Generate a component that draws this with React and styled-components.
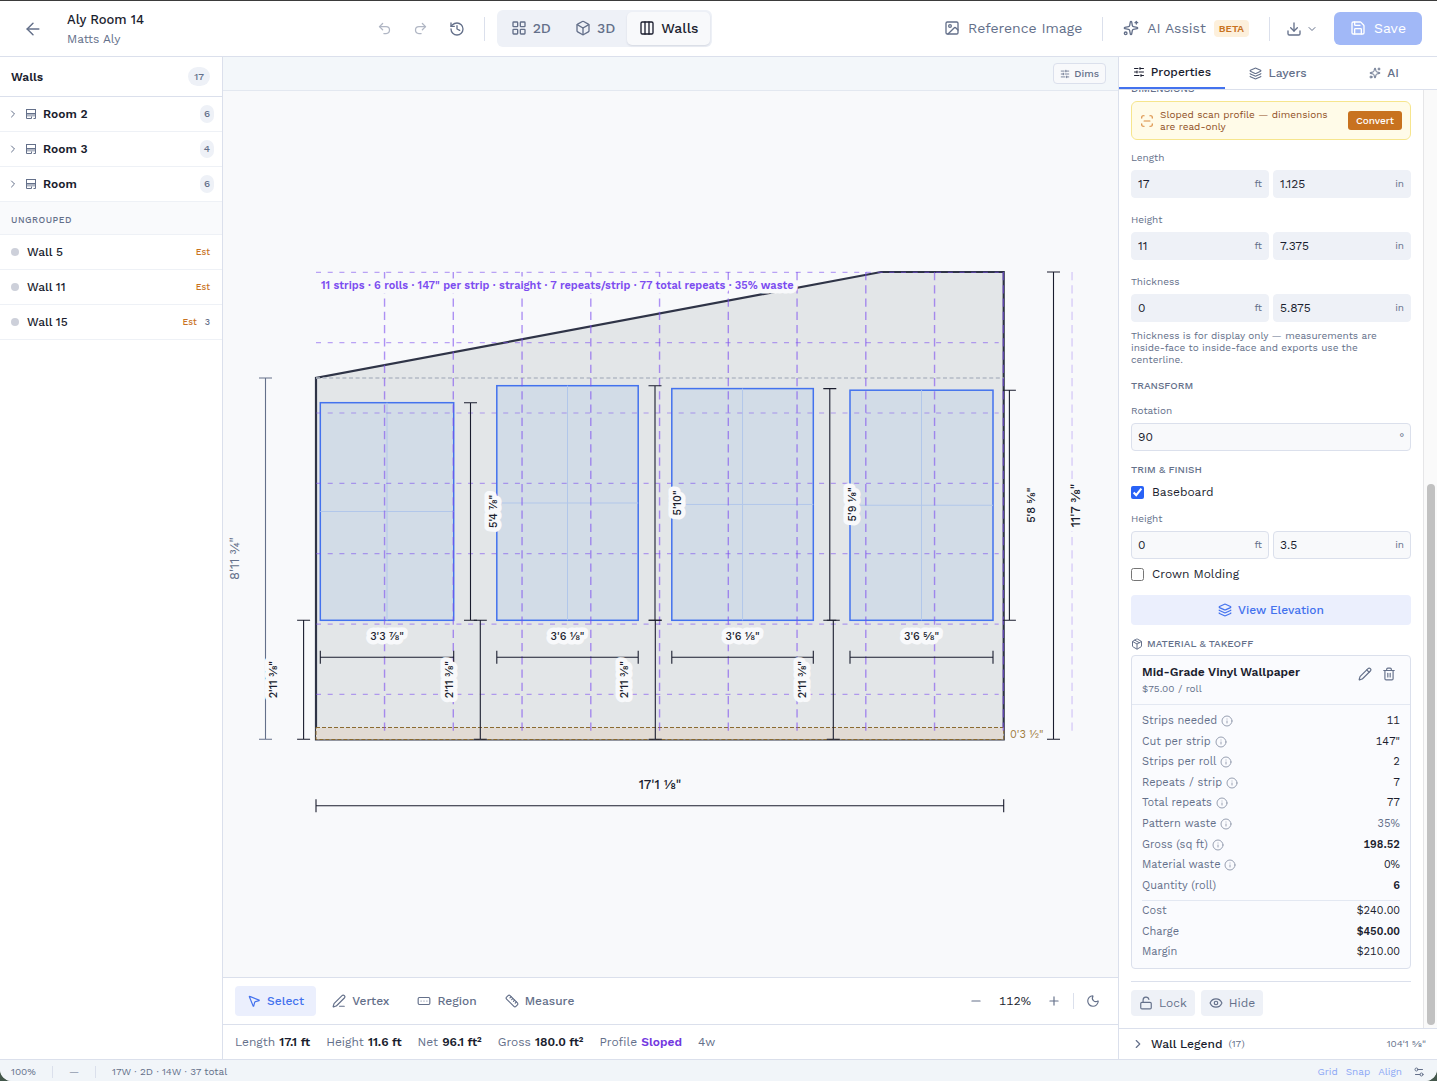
import React from "react";
import styled, { createGlobalStyle, css } from "styled-components";
import {
  ArrowLeft,
  Box,
  ChevronDown,
  ChevronRight,
  Columns3,
  Download,
  Eye,
  History,
  Image,
  Info,
  Layers,
  LayoutGrid,
  LockOpen,
  Minus,
  Moon,
  MousePointer2,
  Package,
  Pencil,
  PenLine,
  Plus,
  Redo2,
  RectangleEllipsis,
  Ruler,
  Save,
  ScanLine,
  Settings2,
  SlidersHorizontal,
  Sparkles,
  Trash2,
  Undo2,
} from "lucide-react";

const ink = "#1a1d2e";
const slate = "#64708a";
const line = "#dbe0ec";
const blue = "#4372ee";
const canvasBg = "#f8f9fb";

const GlobalStyle = createGlobalStyle`
  *, *::before, *::after {
    box-sizing: border-box;
  }
  body {
    margin: 0;
    background: #43574b;
    color: ${ink};
    font-family: "Work Sans", Inter, "Liberation Sans", sans-serif;
    font-size: 12px;
    line-height: 16px;
  }
  button, input {
    font: inherit;
    color: inherit;
  }
  button {
    border: 0;
    padding: 0;
    background: none;
    cursor: pointer;
  }
  svg {
    flex: none;
  }
`;

const Shell = styled.div`
  display: flex;
  flex-direction: column;
  height: 100vh;
  border-top: 1px solid #3b3b3b;
  border-radius: 0 0 12px 12px;
  overflow: hidden;
  background: #fff;
`;

const TopBar = styled.header`
  display: flex;
  align-items: center;
  justify-content: space-between;
  height: 56px;
  flex: none;
  padding: 0 15px 0 23px;
  border-bottom: 1px solid ${line};
`;

const Group = styled.div`
  display: flex;
  align-items: center;
  gap: ${(p) => p.$gap || 0}px;
`;

const TitleBlock = styled.div`
  margin-left: 24px;
`;

const Title = styled.h1`
  margin: 0;
  font-size: 13px;
  font-weight: 500;
  line-height: 20px;
`;

const Subtitle = styled.div`
  color: ${slate};
  line-height: 18px;
`;

const IconButton = styled.button`
  display: flex;
  align-items: center;
  justify-content: center;
  gap: 4px;
  width: ${(p) => p.$w || 18}px;
  height: ${(p) => p.$h || 24}px;
  color: ${slate};
  opacity: ${(p) => (p.disabled ? 0.5 : 1)};
`;

const Divider = styled.span`
  width: 1px;
  height: ${(p) => p.$h || 24}px;
  background: ${line};
`;

const Segments = styled.div`
  display: flex;
  padding: 2px;
  border-radius: 6px;
  background: #eef1f7;
`;

const Segment = styled.button`
  display: flex;
  align-items: center;
  gap: 6px;
  height: 33px;
  padding: 0 12px 1px;
  border-radius: 5px;
  font-size: 14px;
  font-weight: 500;
  color: ${slate};
  ${(p) =>
    p.$active &&
    css`
      background: ${canvasBg};
      color: ${ink};
      box-shadow: 0 1px 2px rgba(30, 40, 70, 0.12);
    `}
`;

const HeaderAction = styled.button`
  display: flex;
  align-items: center;
  gap: 8px;
  padding-bottom: 1px;
  font-size: 14px;
  color: ${slate};
`;

const Beta = styled.span`
  padding: 0 5px;
  border-radius: 4px;
  background: #fdf0dc;
  color: #c9731f;
  font-size: 10px;
  font-weight: 600;
  line-height: 17px;
`;

const SaveButton = styled(HeaderAction)`
  height: 33px;
  padding: 0 16px 1px;
  border-radius: 6px;
  background: #a1b8f7;
  color: #fff;
`;

const Main = styled.div`
  display: flex;
  flex: 1;
  min-height: 0;
`;

const Sidebar = styled.aside`
  width: 223px;
  flex: none;
  border-right: 1px solid ${line};
`;

const SidebarHead = styled.div`
  display: flex;
  align-items: center;
  justify-content: space-between;
  height: 40px;
  padding: 0 12px 0 11px;
  border-bottom: 1px solid ${line};
  font-weight: 600;
`;

const Count = styled.span`
  padding: 0 ${(p) => (p.$large ? 6 : 4)}px;
  border-radius: 10px;
  background: #eef1f7;
  color: ${slate};
  font-size: 10px;
  font-weight: 500;
  line-height: ${(p) => (p.$large ? 19 : 18)}px;
`;

const ListRow = styled.button`
  display: flex;
  align-items: center;
  gap: ${(p) => (p.$group ? 6 : 8)}px;
  width: 100%;
  height: 35px;
  padding: 0 ${(p) => (p.$group ? 8 : 12)}px 0 ${(p) => (p.$group ? 7 : 11)}px;
  border-bottom: 1px solid #eef1f6;
  text-align: left;
`;

const RowName = styled.span`
  flex: 1;
  font-weight: ${(p) => p.$weight};
`;

const GroupLabel = styled.div`
  height: 33px;
  padding: 2px 11px 0;
  border-bottom: 1px solid #eef1f6;
  background: #f9fafc;
  color: ${slate};
  font-size: 9px;
  font-weight: 500;
  letter-spacing: 0.5px;
  line-height: 32px;
`;

const Dot = styled.span`
  width: 8px;
  height: 8px;
  border-radius: 50%;
  background: #cdd0da;
`;

const Est = styled.span`
  color: #c9731f;
  font-size: 9px;
  font-weight: 500;
`;

const Openings = styled(Est)`
  color: ${slate};
`;

const Center = styled.main`
  display: flex;
  flex-direction: column;
  flex: 1;
  min-width: 0;
`;

const CanvasBar = styled.div`
  display: flex;
  align-items: center;
  justify-content: flex-end;
  height: 34px;
  flex: none;
  padding: 0 12px;
  border-bottom: 1px solid #e3e8f0;
  background: #f3f7fa;
`;

const DimsButton = styled.button`
  display: flex;
  align-items: center;
  gap: 4px;
  height: 21px;
  padding: 0 6px;
  border: 1px solid ${line};
  border-radius: 4px;
  background: ${canvasBg};
  color: ${slate};
  font-size: 10px;
  font-weight: 500;
`;

const Canvas = styled.div`
  flex: 1;
  min-height: 0;
  background: ${canvasBg};

  svg {
    display: block;
    width: 100%;
    height: 100%;
  }
`;

const ToolBar = styled.div`
  display: flex;
  align-items: center;
  justify-content: space-between;
  height: 47px;
  flex: none;
  padding: 0 16px 0 12px;
  border-top: 1px solid ${line};
`;

const Tool = styled.button`
  display: flex;
  align-items: center;
  gap: 6px;
  height: 30px;
  padding: 0 12px;
  border-radius: 4px;
  font-weight: 500;
  color: ${(p) => (p.$active ? blue : slate)};
  background: ${(p) => (p.$active ? "#ebeffd" : "none")};
`;

const Zoom = styled.output`
  width: 48px;
  text-align: center;
  font-variant-numeric: tabular-nums;
`;

const Metrics = styled.div`
  display: flex;
  align-items: center;
  gap: 16px;
  height: 35px;
  flex: none;
  padding: 0 12px;
  border-top: 1px solid ${line};
  color: ${slate};

  b {
    font-weight: 600;
    color: ${ink};
  }
`;

const Profile = styled.b`
  && {
    color: #7338e0;
  }
`;

const Inspector = styled.aside`
  display: flex;
  flex-direction: column;
  width: 319px;
  flex: none;
  border-left: 1px solid ${line};
`;

const Tabs = styled.div`
  display: flex;
  flex: none;
  height: 33px;
  border-bottom: 1px solid ${line};
`;

const Tab = styled.button`
  display: flex;
  flex: 1;
  align-items: center;
  justify-content: center;
  gap: 6px;
  font-weight: 500;
  color: ${(p) => (p.$active ? ink : slate)};
  border-bottom: ${(p) => (p.$active ? `2px solid ${blue}` : "0")};
`;

const ScrollArea = styled.div`
  display: flex;
  flex: 1;
  min-height: 0;
`;

const Properties = styled.div`
  display: flex;
  flex: 1;
  flex-direction: column;
  justify-content: flex-end;
  min-width: 0;
  overflow: hidden;
  padding: 0 12px 12px;

  > * {
    flex: none;
  }
`;

const Track = styled.div`
  display: flex;
  flex-direction: column;
  justify-content: flex-end;
  width: 14px;
  padding: 3px;
  border-left: 1px solid #e6e6e8;
  background: #fafafa;
`;

const Thumb = styled.div`
  height: 58%;
  width: 8px;
  border-radius: 4px;
  background: #c1c1c1;
`;

const Heading = styled.h2`
  display: flex;
  align-items: center;
  gap: 4px;
  margin: 11px 0 0;
  color: ${slate};
  font-size: 10px;
  font-weight: 500;
  line-height: 16px;
`;

const Notice = styled.div`
  display: flex;
  align-items: center;
  gap: 6px;
  height: 39px;
  margin: 4px 0 10px;
  padding: 0 8px;
  border: 1px solid #f6e58d;
  border-radius: 6px;
  background: #fffbe8;
  color: #8f4f1f;
  font-size: 10px;
  line-height: 12px;

  span {
    flex: 1;
  }
  svg {
    color: #d98a3d;
  }
`;

const Convert = styled.button`
  height: 19px;
  padding: 0 8px;
  border-radius: 3px;
  background: #c8721f;
  color: #fff;
  font-weight: 500;
`;

const Field = styled.fieldset`
  min-width: 0;
  margin: ${(p) => p.$margin || 0};
  padding: 0;
  border: 0;
`;

const FieldLabel = styled.label`
  display: block;
  margin-bottom: 4px;
  color: ${slate};
  font-size: 10px;
  line-height: 16px;
`;

const Inputs = styled.div`
  display: flex;
  gap: 4px;
`;

const InputBox = styled.div`
  display: flex;
  align-items: center;
  flex: 1;
  min-width: 0;
  height: 28px;
  padding: 0 6px;
  border: 1px solid ${(p) => (p.$locked ? "#eef1f7" : line)};
  border-radius: 4px;
  background: ${(p) => (p.$locked ? "#eef1f7" : canvasBg)};
  color: ${slate};
  font-size: 10px;

  input {
    flex: 1;
    min-width: 0;
    padding: 0;
    border: 0;
    outline: 0;
    background: none;
    color: ${ink};
    font-size: 12px;
  }
`;

const Hint = styled.p`
  margin: 8px 0 1px;
  color: ${slate};
  font-size: 10px;
  line-height: 12px;
`;

const Check = styled.label`
  display: flex;
  align-items: center;
  gap: 8px;
  margin: ${(p) => p.$margin};

  input {
    width: 13px;
    height: 13px;
    margin: 0;
    accent-color: #2962f6;
  }
`;

const ElevationButton = styled.button`
  display: flex;
  align-items: center;
  justify-content: center;
  gap: 6px;
  height: 30px;
  border-radius: 4px;
  background: #ebeffd;
  color: ${blue};
  font-weight: 500;
`;

const Card = styled.section`
  margin: 3px 0 12px;
  border: 1px solid ${line};
  border-radius: 4px;
  background: #fafbfe;
`;

const CardHead = styled.div`
  display: flex;
  align-items: flex-start;
  justify-content: space-between;
  height: 49px;
  padding: 7px 12px 0 10px;
  border-bottom: 1px solid #e3e8f2;

  h3 {
    margin: 0;
    font-size: 12px;
    font-weight: 600;
    line-height: 18px;
  }
  p {
    margin: 0;
    color: ${slate};
    font-size: 10px;
    line-height: 15px;
  }
`;

const CardBody = styled.div`
  padding: 6px 10px;
`;

const Takeoff = styled.table`
  width: 100%;
  height: ${(p) => p.$height}px;
  border-collapse: collapse;
  font-size: 11px;

  & + & {
    margin-top: 4px;
    border-top: 1px solid #e3e8f2;
  }
  th,
  td {
    padding: 0;
    font-weight: 400;
  }
  th {
    color: ${slate};
    text-align: left;
  }
  svg {
    margin-left: 4px;
    vertical-align: -3px;
    opacity: 0.65;
  }
`;

const Value = styled.td`
  && {
    text-align: right;
    font-variant-numeric: tabular-nums;
    color: ${(p) => (p.$muted ? slate : ink)};
    font-weight: ${(p) => (p.$strong ? 600 : 400)};
  }
`;

const Actions = styled.div`
  display: flex;
  gap: 6px;
  padding-top: 8px;
  border-top: 1px solid ${line};
`;

const Action = styled.button`
  display: flex;
  align-items: center;
  gap: 6px;
  height: 26px;
  padding: 0 8px;
  border-radius: 4px;
  background: #eef1f7;
  color: ${slate};
`;

const Legend = styled.button`
  display: flex;
  align-items: center;
  gap: 6px;
  height: 31px;
  flex: none;
  padding: 0 11px 0 12px;
  border-top: 1px solid ${line};
  color: ${slate};
  font-size: 10px;

  b {
    color: ${ink};
    font-size: 12px;
    font-weight: 500;
  }
  span:last-child {
    margin-left: auto;
  }
`;

const StatusBar = styled.footer`
  display: flex;
  align-items: center;
  gap: 16px;
  height: 22px;
  flex: none;
  padding: 2px 9px 0 11px;
  border-top: 1px solid ${line};
  background: #f1f5f9;
  color: ${slate};
  font-size: 10px;
`;

const Snaps = styled.div`
  display: flex;
  align-items: center;
  gap: 8px;
  margin-left: auto;

  a {
    color: #8ba6f5;
    text-decoration: none;
  }
`;

const DimText = styled.text`
  font-size: ${(p) => p.$size || 11}px;
  font-weight: ${(p) => p.$weight || 500};
  fill: ${(p) => p.$color || ink};
  stroke: ${canvasBg};
  stroke-width: 9px;
  stroke-linejoin: round;
  paint-order: stroke;
`;

const rooms = [
  { name: "Room 2", count: 6 },
  { name: "Room 3", count: 4 },
  { name: "Room", count: 6 },
];

const walls = [{ name: "Wall 5" }, { name: "Wall 11" }, { name: "Wall 15", openings: 3 }];

const quantities = [
  { name: "Strips needed", value: "11", info: true },
  { name: "Cut per strip", value: '147"', info: true },
  { name: "Strips per roll", value: "2", info: true },
  { name: "Repeats / strip", value: "7", info: true },
  { name: "Total repeats", value: "77", info: true },
  { name: "Pattern waste", value: "35%", info: true, muted: true },
  { name: "Gross (sq ft)", value: "198.52", info: true, strong: true },
  { name: "Material waste", value: "0%", info: true },
  { name: "Quantity (roll)", value: "6", strong: true },
];

const costs = [
  { name: "Cost", value: "$240.00" },
  { name: "Charge", value: "$450.00", strong: true },
  { name: "Margin", value: "$210.00" },
];

const wall = { left: 316, right: 1003.7, top: 272, eave: 378, bottom: 739.5, ridge: 881 };
const sill = 620.3;

const windows = [
  { x1: 320.3, x2: 453.7, y: 402.7, width: `3'3 ⅞"`, height: `5'4 ⅞"`, dimX: 470.5, floorX: 480.3 },
  { x1: 496.8, x2: 638.2, y: 385.7, width: `3'6 ⅛"`, height: `5'10"`, dimX: 655, floorX: 655.3 },
  { x1: 671.8, x2: 813.3, y: 388.6, width: `3'6 ⅛"`, height: `5'9 ⅛"`, dimX: 829.8, floorX: 833.3 },
  { x1: 850, x2: 993, y: 390.2, width: `3'6 ⅝"`, height: `5'8 ⅝"`, dimX: 1009.4 },
];

const VerticalDim = ({ x, y1, y2, label, labelX, color = ink, size, weight }) => (
  <>
    <path
      d={`M${x} ${y1}V${y2}M${x - 6.5} ${y1}h13M${x - 6.5} ${y2}h13`}
      stroke={color}
      strokeWidth="1.1"
      fill="none"
    />
    <DimText
      $size={size}
      $color={color}
      $weight={weight}
      textAnchor="middle"
      transform={`translate(${labelX} ${(y1 + y2) / 2}) rotate(-90)`}
    >
      {label}
    </DimText>
  </>
);

const HorizontalDim = ({ x1, x2, y, label, labelY, size }) => (
  <>
    <path
      d={`M${x1} ${y}H${x2}M${x1} ${y - 6.5}v13M${x2} ${y - 6.5}v13`}
      stroke={ink}
      strokeWidth="1.1"
      fill="none"
    />
    <DimText $size={size} textAnchor="middle" x={(x1 + x2) / 2} y={labelY}>
      {label}
    </DimText>
  </>
);

const Elevation = () => {
  const strips = Array.from({ length: 11 }, (_, i) => wall.left - 0.2 + 68.75 * (i + 1));
  const repeats = Array.from({ length: 7 }, (_, i) => wall.top + 0.3 + 70.35 * i);

  return (
    <svg viewBox="223 91 895 886" role="img" aria-label="Wall elevation">
      <path
        d={`M${wall.left} ${wall.bottom}V${wall.eave}L${wall.ridge} ${wall.top}H${wall.right}V${wall.bottom}Z`}
        fill="#e3e6e8"
        stroke="#2f3447"
        strokeWidth="2.2"
      />
      <path
        d={`M${wall.left} ${wall.eave}H${wall.right}`}
        stroke="#b4bac5"
        strokeWidth="1.4"
        strokeDasharray="4 2.6"
      />
      <rect
        x={wall.left}
        y="727.5"
        width={wall.right - wall.left}
        height="12"
        fill="#e2dbd4"
        stroke="#8a6a30"
        strokeDasharray="4 2"
      />

      {windows.map((w) => (
        <g key={w.x1}>
          <rect
            x={w.x1}
            y={w.y}
            width={w.x2 - w.x1}
            height={sill - w.y}
            fill="#d2dce7"
            stroke={blue}
            strokeWidth="1.5"
          />
          <path
            d={`M${(w.x1 + w.x2) / 2} ${w.y}V${sill}M${w.x1} ${(w.y + sill) / 2}H${w.x2}`}
            stroke="#b2c7ea"
          />
        </g>
      ))}

      {strips.map((x, i) => (
        <path
          key={x}
          d={`M${x} ${wall.top}V735`}
          stroke="#7c4df0"
          strokeWidth="1.4"
          strokeDasharray="8.2 5.05"
          opacity={i === 10 ? 0.25 : 0.6}
        />
      ))}
      {repeats.map((y) => (
        <path
          key={y}
          d={`M${wall.left} ${y}H${wall.right - 5}`}
          stroke="#7c4df0"
          strokeWidth="1.2"
          strokeDasharray="5 6.7"
          opacity="0.5"
        />
      ))}

      <VerticalDim
        x={265.5}
        y1={wall.eave}
        y2={739.2}
        label={`8'11 ¾"`}
        labelX={239}
        color={slate}
        size={13}
        weight={400}
      />
      <VerticalDim
        x={1053.5}
        y1={wall.top}
        y2={739.2}
        label={`11'7 ⅜"`}
        labelX={1080}
        size={13}
      />
      <VerticalDim x={303.6} y1={sill} y2={739.2} label={`2'11 ⅜"`} labelX={277} />

      {windows.map((w) => (
        <g key={w.x1}>
          <HorizontalDim x1={w.x1} x2={w.x2} y={657.2} label={w.width} labelY={640} />
          <VerticalDim x={w.dimX} y1={w.y} y2={sill} label={w.height} labelX={w.dimX + 26} />
          {w.floorX && (
            <VerticalDim
              x={w.floorX}
              y1={sill}
              y2={739.2}
              label={`2'11 ⅜"`}
              labelX={w.floorX - 27}
            />
          )}
        </g>
      ))}

      <HorizontalDim
        x1={wall.left}
        x2={wall.right}
        y={805.8}
        label={`17'1 ⅛"`}
        labelY={789}
        size={13}
      />
      <DimText x="1010" y="738" $color="#a07c3c" $weight={400}>
        {`0'3 ½"`}
      </DimText>
      <DimText x="321" y="289" $color="#7c4df0" $weight={600}>
        11 strips · 6 rolls · 147" per strip · straight · 7 repeats/strip · 77 total repeats · 35%
        waste
      </DimText>
    </svg>
  );
};

const RoomIcon = () => (
  <svg width="12" height="12" viewBox="0 0 12 12" fill="none" stroke={slate} aria-hidden="true">
    <rect x="1.5" y="1.5" width="9" height="4" />
    <rect x="2" y="6" width="8" height="2.5" fill={slate} fillOpacity="0.5" stroke="none" />
    <path d="M1.5 6v4.5h5V8.5M8.5 10.5h2V6" />
  </svg>
);

const FeetInches = ({ id, label, feet, inches, locked, margin }) => (
  <Field $margin={margin}>
    <FieldLabel htmlFor={`${id}-ft`}>{label}</FieldLabel>
    <Inputs>
      <InputBox $locked={locked}>
        <input id={`${id}-ft`} defaultValue={feet} readOnly={locked} />
        ft
      </InputBox>
      <InputBox $locked={locked}>
        <input aria-label={`${label} inches`} defaultValue={inches} readOnly={locked} />
        in
      </InputBox>
    </Inputs>
  </Field>
);

const TakeoffRows = ({ rows, height }) => (
  <Takeoff $height={height}>
    <tbody>
      {rows.map((row) => (
        <tr key={row.name}>
          <th scope="row">
            {row.name}
            {row.info && <Info size={12} strokeWidth={2} />}
          </th>
          <Value $strong={row.strong} $muted={row.muted}>
            {row.value}
          </Value>
        </tr>
      ))}
    </tbody>
  </Takeoff>
);

const Header = () => (
  <TopBar>
    <Group>
      <IconButton aria-label="Back" $w={20}>
        <ArrowLeft size={20} strokeWidth={1.75} />
      </IconButton>
      <TitleBlock>
        <Title>Aly Room 14</Title>
        <Subtitle>Matts Aly</Subtitle>
      </TitleBlock>
    </Group>
    <Group $gap={12}>
      <Group $gap={18}>
        <IconButton aria-label="Undo" disabled>
          <Undo2 size={15} />
        </IconButton>
        <IconButton aria-label="Redo" disabled>
          <Redo2 size={15} />
        </IconButton>
        <IconButton aria-label="History">
          <History size={16} />
        </IconButton>
        <Divider />
      </Group>
      <Segments>
        <Segment>
          <LayoutGrid size={16} />
          2D
        </Segment>
        <Segment>
          <Box size={16} />
          3D
        </Segment>
        <Segment $active>
          <Columns3 size={16} />
          Walls
        </Segment>
      </Segments>
    </Group>
    <Group $gap={20}>
      <HeaderAction>
        <Image size={16} />
        Reference Image
      </HeaderAction>
      <Divider />
      <HeaderAction>
        <Sparkles size={16} />
        AI Assist
        <Beta>BETA</Beta>
      </HeaderAction>
      <Group $gap={16}>
        <Divider />
        <IconButton aria-label="Export" $w={32}>
          <Download size={16} />
          <ChevronDown size={12} />
        </IconButton>
        <SaveButton>
          <Save size={16} />
          Save
        </SaveButton>
      </Group>
    </Group>
  </TopBar>
);

const WallList = () => (
  <Sidebar>
    <SidebarHead>
      Walls
      <Count $large>17</Count>
    </SidebarHead>
    {rooms.map((room) => (
      <ListRow key={room.name} $group>
        <ChevronRight size={12} color={slate} />
        <RoomIcon />
        <RowName $weight={600}>{room.name}</RowName>
        <Count>{room.count}</Count>
      </ListRow>
    ))}
    <GroupLabel>UNGROUPED</GroupLabel>
    {walls.map((item) => (
      <ListRow key={item.name}>
        <Dot />
        <RowName $weight={500}>{item.name}</RowName>
        <Est>Est</Est>
        {item.openings && <Openings>{item.openings}</Openings>}
      </ListRow>
    ))}
  </Sidebar>
);

const PropertiesPanel = () => (
  <Inspector>
    <Tabs>
      <Tab $active>
        <SlidersHorizontal size={12} />
        Properties
      </Tab>
      <Tab>
        <Layers size={13} />
        Layers
      </Tab>
      <Tab>
        <Sparkles size={12} />
        AI
      </Tab>
    </Tabs>
    <ScrollArea>
      <Properties>
        <Heading>DIMENSIONS</Heading>
        <Notice>
          <ScanLine size={14} />
          <span>Sloped scan profile — dimensions are read-only</span>
          <Convert>Convert</Convert>
        </Notice>
        <FeetInches
          id="length"
          label="Length"
          feet="17"
          inches="1.125"
          locked
          margin="0 0 14px"
        />
        <FeetInches
          id="height"
          label="Height"
          feet="11"
          inches="7.375"
          locked
          margin="0 0 14px"
        />
        <FeetInches id="thickness" label="Thickness" feet="0" inches="5.875" locked />
        <Hint>
          Thickness is for display only — measurements are inside-face to inside-face and exports
          use the centerline.
        </Hint>
        <Heading>TRANSFORM</Heading>
        <Field $margin="9px 0 0">
          <FieldLabel htmlFor="rotation">Rotation</FieldLabel>
          <InputBox>
            <input id="rotation" defaultValue="90" />°
          </InputBox>
        </Field>
        <Heading>TRIM &amp; FINISH</Heading>
        <Check $margin="6px 0 11px">
          <input type="checkbox" defaultChecked />
          Baseboard
        </Check>
        <FeetInches id="baseboard" label="Height" feet="0" inches="3.5" />
        <Check $margin="7px 0 13px">
          <input type="checkbox" />
          Crown Molding
        </Check>
        <ElevationButton>
          <Layers size={14} />
          View Elevation
        </ElevationButton>
        <Heading>
          <Package size={12} />
          MATERIAL &amp; TAKEOFF
        </Heading>
        <Card>
          <CardHead>
            <div>
              <h3>Mid-Grade Vinyl Wallpaper</h3>
              <p>$75.00 / roll</p>
            </div>
            <Group $gap={6}>
              <IconButton aria-label="Edit material" $h={22}>
                <Pencil size={14} />
              </IconButton>
              <IconButton aria-label="Remove material" $h={22}>
                <Trash2 size={14} />
              </IconButton>
            </Group>
          </CardHead>
          <CardBody>
            <TakeoffRows rows={quantities} height={185} />
            <TakeoffRows rows={costs} height={62} />
          </CardBody>
        </Card>
        <Actions>
          <Action>
            <LockOpen size={14} />
            Lock
          </Action>
          <Action>
            <Eye size={14} />
            Hide
          </Action>
        </Actions>
      </Properties>
      <Track>
        <Thumb />
      </Track>
    </ScrollArea>
    <Legend>
      <ChevronRight size={14} />
      <b>Wall Legend</b>
      <span>(17)</span>
      <span>104'1 ⅝"</span>
    </Legend>
  </Inspector>
);

const App = () => {
  return (
    <Shell>
      <GlobalStyle />
      <Header />
      <Main>
        <WallList />
        <Center>
          <CanvasBar>
            <DimsButton>
              <SlidersHorizontal size={10} />
              Dims
            </DimsButton>
          </CanvasBar>
          <Canvas>
            <Elevation />
          </Canvas>
          <ToolBar>
            <Group $gap={4}>
              <Tool $active>
                <MousePointer2 size={14} />
                Select
              </Tool>
              <Tool>
                <PenLine size={14} />
                Vertex
              </Tool>
              <Tool>
                <RectangleEllipsis size={14} />
                Region
              </Tool>
              <Tool>
                <Ruler size={14} />
                Measure
              </Tool>
            </Group>
            <Group $gap={10}>
              <Group $gap={6}>
                <IconButton aria-label="Zoom out">
                  <Minus size={14} />
                </IconButton>
                <Zoom>112%</Zoom>
                <IconButton aria-label="Zoom in">
                  <Plus size={14} />
                </IconButton>
              </Group>
              <Divider $h={16} />
              <IconButton aria-label="Dark mode">
                <Moon size={14} />
              </IconButton>
            </Group>
          </ToolBar>
          <Metrics>
            <span>
              Length <b>17.1 ft</b>
            </span>
            <span>
              Height <b>11.6 ft</b>
            </span>
            <span>
              Net <b>96.1 ft²</b>
            </span>
            <span>
              Gross <b>180.0 ft²</b>
            </span>
            <span>
              Profile <Profile>Sloped</Profile>
            </span>
            <span>4w</span>
          </Metrics>
        </Center>
        <PropertiesPanel />
      </Main>
      <StatusBar>
        <span>100%</span>
        <Divider $h={12} />
        <span>—</span>
        <Divider $h={12} />
        <span>17W · 2D · 14W · 37 total</span>
        <Snaps>
          <a href="#grid">Grid</a>
          <a href="#snap">Snap</a>
          <a href="#align">Align</a>
          <IconButton aria-label="Snap settings" $h={16}>
            <Settings2 size={12} />
          </IconButton>
        </Snaps>
      </StatusBar>
    </Shell>
  );
};

export default App;
